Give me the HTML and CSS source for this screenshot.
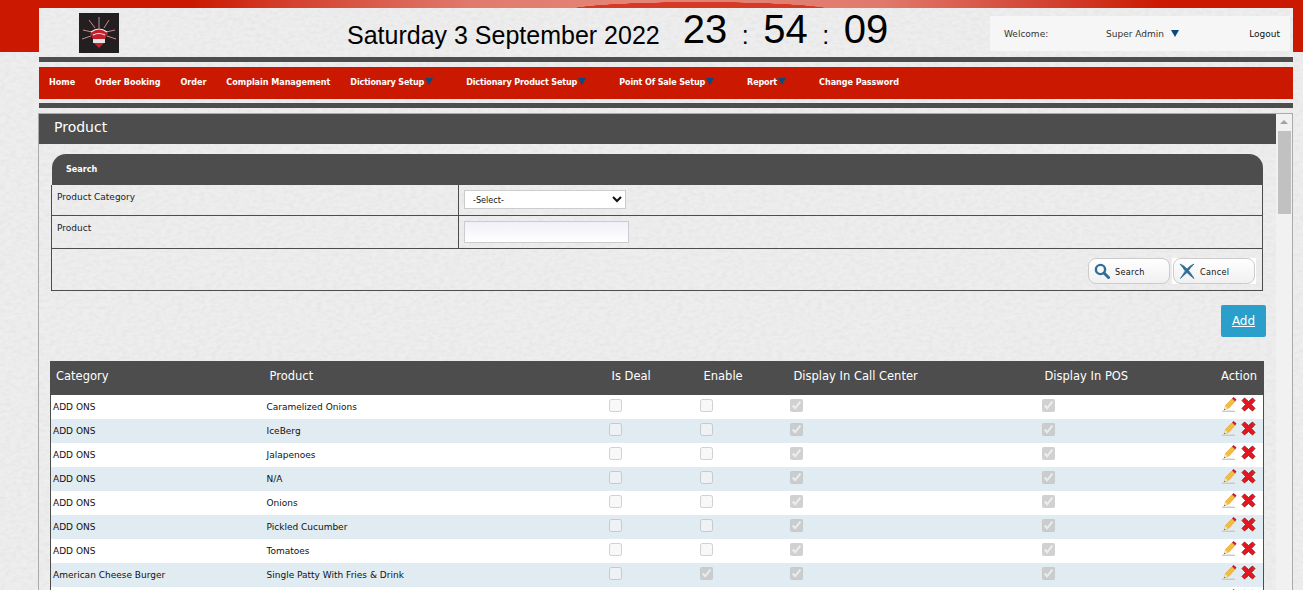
FILE: index.html
```html
<!DOCTYPE html>
<html lang="en">
<head>
    <meta charset="UTF-8">
    <title>Product</title>
    <link rel="stylesheet" href="styles.css">
</head>
<body>
    <svg class="defs" width="0" height="0">
        <symbol id="pencil" viewBox="0 0 15 15">
            <path d="M0 14.300h13" stroke="#c9c9c9" stroke-width="1.400"/>
            <path d="M3.500 8.500 10 1.800l3 2.600-6.500 6.900-3.800 1.500z" fill="#f4bd3a" stroke="#dc9a20" stroke-width=".6"/>
            <path d="M10 1.500 11.500 0l3 2.600L13.200 4.600z" fill="#b8232f"/>
            <path d="M3.400 9 1.800 13l4-1.500z" fill="#f8e3b4"/>
            <path d="M2.300 11.800 1.800 13l1.300-.5z" fill="#222"/>
        </symbol>
        <symbol id="cross" viewBox="0 0 15 15">
            <path d="M3.500 1 7.500 4.600 11.500 1 14 3.600 10.400 7.500 14 11.400 11.500 14 7.500 10.400 3.500 14 1 11.400 4.600 7.500 1 3.600z" fill="#e2171f" stroke="#a8141b" stroke-width=".9"/>
        </symbol>
    </svg>

    <div class="topband"></div>
    <div class="page">
        <header class="head">
            <svg class="logo" viewBox="0 0 40 40">
                <rect width="40" height="40" fill="#231f20"/>
                <path d="M20 4v11M10 7l6 8M30 7l-5 8M4 17l9 2M36 17l-9 2M3 26l9-3M37 26l-9-3" stroke="#c98a8f" stroke-width="1"/>
                <path d="M11 20q9-8 18 0l-3 6H14z" fill="#c4202c"/>
                <path d="M12 19q8-6 16 0M14 22q6-3 12 0" stroke="#efefef" stroke-width="1.200" fill="none"/>
                <path d="M14 26h12v4H14z" fill="#e4e4e4"/>
                <path d="M15 30h10l-5 5z" fill="#c4202c"/>
            </svg>
            <div class="date">Saturday 3 September 2022</div>
            <div class="clock"><span>23</span><i>:</i><span>54</span><i>:</i><span>09</span></div>
            <div class="welcome">
                <span class="welcome-label">Welcome:</span>
                <span class="welcome-name">Super Admin</span>
                <span class="caret caret-big"></span>
                <a class="logout">Logout</a>
            </div>
        </header>
        <div class="rule"></div>
        <nav class="nav">
            <a>Home</a>
            <a>Order Booking</a>
            <a>Order</a>
            <a>Complain Management</a>
            <a class="has-caret">Dictionary Setup<span class="caret"></span></a>
            <a class="has-caret">Dictionary Product Setup<span class="caret"></span></a>
            <a class="has-caret">Point Of Sale Setup<span class="caret"></span></a>
            <a class="has-caret">Report<span class="caret"></span></a>
            <a>Change Password</a>
        </nav>
        <div class="rule rule-low"></div>

        <section class="panel">
            <div class="panel-body">
                <h2 class="panel-title">Product</h2>

                <div class="search-head">Search</div>
                <form class="search">
                    <div class="search-row row-one">
                        <label class="search-label">Product Category</label>
                        <div class="search-field">
                            <select class="select"><option>-Select-</option></select>
                        </div>
                    </div>
                    <div class="search-row row-two">
                        <label class="search-label">Product</label>
                        <div class="search-field">
                            <input class="text" type="text">
                        </div>
                    </div>
                    <div class="search-actions">
                        <button type="button" class="btn">
                            <svg viewBox="0 0 16 16"><circle cx="6.500" cy="6.500" r="4.600" fill="none" stroke="#2f6f96" stroke-width="2.400"/><path d="M10 10l4.500 4.500" stroke="#2f6f96" stroke-width="3" stroke-linecap="round"/></svg>
                            Search
                        </button>
                        <div class="btn-wrap">
                            <button type="button" class="btn">
                                <svg viewBox="0 0 16 16"><path d="M1 1q5 2 7 5 3-3.500 7-5-4 4-5.500 6.500Q12.500 11 15 15.500 11 12.500 8 9.500 5 12 1.500 15.500 4 11.500 6.300 8 3.500 4 1 1z" fill="#2f6f96" stroke="#2f6f96" stroke-width=".8"/></svg>
                                Cancel
                            </button>
                        </div>
                    </div>
                </form>

                <div class="add-row"><a class="add">Add</a></div>

                <table class="grid">
                    <colgroup>
                        <col class="c-cat"><col class="c-prod"><col class="c-deal"><col class="c-enable"><col class="c-call"><col class="c-pos"><col class="c-act">
                    </colgroup>
                    <thead>
                        <tr>
                            <th>Category</th><th>Product</th><th>Is Deal</th><th>Enable</th><th>Display In Call Center</th><th>Display In POS</th><th class="th-action">Action</th>
                        </tr>
                    </thead>
                    <tbody>
                        <tr><td>ADD ONS</td><td>Caramelized Onions</td><td><input type="checkbox" disabled></td><td><input type="checkbox" disabled></td><td><input type="checkbox" disabled checked></td><td><input type="checkbox" disabled checked></td><td class="actions"><svg><use href="#pencil"/></svg><svg><use href="#cross"/></svg></td></tr>
                        <tr><td>ADD ONS</td><td>IceBerg</td><td><input type="checkbox" disabled></td><td><input type="checkbox" disabled></td><td><input type="checkbox" disabled checked></td><td><input type="checkbox" disabled checked></td><td class="actions"><svg><use href="#pencil"/></svg><svg><use href="#cross"/></svg></td></tr>
                        <tr><td>ADD ONS</td><td>Jalapenoes</td><td><input type="checkbox" disabled></td><td><input type="checkbox" disabled></td><td><input type="checkbox" disabled checked></td><td><input type="checkbox" disabled checked></td><td class="actions"><svg><use href="#pencil"/></svg><svg><use href="#cross"/></svg></td></tr>
                        <tr><td>ADD ONS</td><td>N/A</td><td><input type="checkbox" disabled></td><td><input type="checkbox" disabled></td><td><input type="checkbox" disabled checked></td><td><input type="checkbox" disabled checked></td><td class="actions"><svg><use href="#pencil"/></svg><svg><use href="#cross"/></svg></td></tr>
                        <tr><td>ADD ONS</td><td>Onions</td><td><input type="checkbox" disabled></td><td><input type="checkbox" disabled></td><td><input type="checkbox" disabled checked></td><td><input type="checkbox" disabled checked></td><td class="actions"><svg><use href="#pencil"/></svg><svg><use href="#cross"/></svg></td></tr>
                        <tr><td>ADD ONS</td><td>Pickled Cucumber</td><td><input type="checkbox" disabled></td><td><input type="checkbox" disabled></td><td><input type="checkbox" disabled checked></td><td><input type="checkbox" disabled checked></td><td class="actions"><svg><use href="#pencil"/></svg><svg><use href="#cross"/></svg></td></tr>
                        <tr><td>ADD ONS</td><td>Tomatoes</td><td><input type="checkbox" disabled></td><td><input type="checkbox" disabled></td><td><input type="checkbox" disabled checked></td><td><input type="checkbox" disabled checked></td><td class="actions"><svg><use href="#pencil"/></svg><svg><use href="#cross"/></svg></td></tr>
                        <tr><td>American Cheese Burger</td><td>Single Patty With Fries &amp; Drink</td><td><input type="checkbox" disabled></td><td><input type="checkbox" disabled checked></td><td><input type="checkbox" disabled checked></td><td><input type="checkbox" disabled checked></td><td class="actions"><svg><use href="#pencil"/></svg><svg><use href="#cross"/></svg></td></tr>
                        <tr><td></td><td></td><td></td><td></td><td></td><td></td><td class="actions"><svg><use href="#pencil"/></svg><svg><use href="#cross"/></svg></td></tr>
                    </tbody>
                </table>
            </div>
            <div class="scrollbar">
                <div class="scroll-up"></div>
                <div class="scroll-thumb"></div>
            </div>
        </section>
    </div>
</body>
</html>
```

FILE: styles.css
```css
/* General page */
html, body {
    height: 590px;
    overflow: hidden;
}

body {
    margin: 0;
    font-family: "DejaVu Sans", sans-serif;
    font-size: 9px;
    color: #111;
    background-color: #eeeeee;
    background-image:
        linear-gradient(#cb1800, #cb1800),
        url("data:image/svg+xml,%3Csvg xmlns='http://www.w3.org/2000/svg' width='500' height='500'%3E%3Cfilter id='n'%3E%3CfeTurbulence type='fractalNoise' baseFrequency='.18 .3' numOctaves='4' stitchTiles='stitch'/%3E%3CfeColorMatrix values='0 0 0 0 .5 0 0 0 0 .5 0 0 0 0 .5 .3 0 0 0 -.1'/%3E%3C/filter%3E%3Crect width='500' height='500' filter='url(%23n)'/%3E%3C/svg%3E");
    background-size: 100% 52px, 500px 500px;
    background-repeat: no-repeat, repeat;
}

.defs {
    position: absolute;
}

.topband {
    height: 8px;
    background:
        radial-gradient(ellipse 135px 9px at 700px 11px, #d53a26 98%, transparent 100%),
        linear-gradient(90deg, #cb1800 0, #cb1800 190px, #d4402e 290px, #e07a6c 470px, #e58576 640px, #e07a6c 880px, #d24534 1040px, #cb1800 1165px);
}

.page {
    margin: 0 10px 0 39px;
}

/* Header */
.head {
    height: 49px;
    display: flex;
    align-items: flex-start;
    background-color: #eeeeee;
    background-image: url("data:image/svg+xml,%3Csvg xmlns='http://www.w3.org/2000/svg' width='500' height='500'%3E%3Cfilter id='n'%3E%3CfeTurbulence type='fractalNoise' baseFrequency='.18 .3' numOctaves='4' stitchTiles='stitch'/%3E%3CfeColorMatrix values='0 0 0 0 .5 0 0 0 0 .5 0 0 0 0 .5 .3 0 0 0 -.1'/%3E%3C/filter%3E%3Crect width='500' height='500' filter='url(%23n)'/%3E%3C/svg%3E");
}

.logo {
    width: 40px;
    height: 40px;
    margin: 5px 0 0 40px;
}

.date {
    margin: 11px 0 0 228px;
    font-family: "Liberation Sans", sans-serif;
    font-size: 25px;
    line-height: 32px;
    color: #000;
    white-space: nowrap;
}

.clock {
    margin: 0 0 0 23px;
    display: flex;
    font-family: "Liberation Sans", sans-serif;
    font-size: 40px;
    line-height: 42px;
    color: #000;
}

.clock i {
    font-style: normal;
    font-size: 25px;
    width: 36px;
    margin-top: 6px;
    text-align: center;
}

.welcome {
    margin: 8px 3px 0 auto;
    width: 300px;
    height: 35px;
    box-sizing: border-box;
    padding: 0 10px 0 14px;
    display: flex;
    align-items: center;
    background: #f6f6f6;
    color: #333;
}

.welcome-label {
    width: 102px;
}

.logout {
    margin-left: auto;
    color: #111;
}

.caret {
    display: inline-block;
    width: 0;
    height: 0;
    border-left: 4px solid transparent;
    border-right: 4px solid transparent;
    border-top: 7px solid #0b4a7d;
}

.caret-big {
    margin: -1px 0 0 7px;
}

.rule {
    height: 5px;
    background: #4d4d4d;
}

.rule-low {
    margin-top: 4px;
}

/* Main menu */
.nav {
    height: 32px;
    box-sizing: border-box;
    margin-top: 5px;
    padding: 0 0 2px 10px;
    display: flex;
    align-items: center;
    gap: 20px;
    background: #cb1800;
}

.nav a {
    font-family: "DejaVu Sans Condensed", "DejaVu Sans", sans-serif;
    letter-spacing: -.05px;
    color: #fff;
    font-weight: bold;
    white-space: nowrap;
}

.nav .has-caret {
    margin-right: 13px;
    letter-spacing: -.17px;
}

.nav .caret {
    margin-left: 1px;
}

/* Content panel */
.panel {
    height: 477px;
    margin: 5px 0 0 -1px;
    border: 1px solid #aaa;
    border-bottom: 0;
    box-sizing: border-box;
    display: flex;
    overflow: hidden;
}

.panel-body {
    flex: 1;
    min-width: 0;
}

.panel-title {
    margin: 0;
    height: 30px;
    padding-left: 15px;
    font-size: 14px;
    font-weight: normal;
    line-height: 27px;
    color: #fff;
    background: #4d4d4d;
}

.scrollbar {
    width: 16px;
    background: #f1f1f1;
}

.scroll-up {
    width: 0;
    height: 0;
    margin: 6px auto 0;
    border-left: 4px solid transparent;
    border-right: 4px solid transparent;
    border-bottom: 4px solid #a3a3a3;
}

.scroll-thumb {
    height: 83px;
    margin: 7px 1px 0 2px;
    background: #c1c1c1;
}

/* Search box */
.search-head {
    height: 31px;
    margin: 10px 13px 0 13px;
    padding-left: 14px;
    font-family: "DejaVu Sans Condensed", "DejaVu Sans", sans-serif;
    line-height: 30px;
    font-weight: bold;
    color: #fff;
    background: #4d4d4d;
    border-radius: 14px 14px 0 0;
}

.search {
    margin: 0 13px 0 12px;
    border: 1px solid #4d4d4d;
    border-top: 0;
}

.search-row {
    display: flex;
    border-bottom: 1px solid #4d4d4d;
}

.row-one {
    height: 30px;
}

.row-two {
    height: 32px;
}

.search-label {
    width: 401px;
    padding: 7px 0 0 5px;
    color: #222;
}

.search-field {
    flex: 1;
    padding-left: 5px;
    border-left: 1px solid #4d4d4d;
}

.select {
    width: 162px;
    height: 19px;
    margin-top: 5px;
    padding-left: 4px;
    font: 9px "DejaVu Sans Condensed", "DejaVu Sans", sans-serif;
    color: #111;
    background: #fff;
    border: 1px solid #ccc;
}

.text {
    width: 165px;
    height: 22px;
    margin-top: 5px;
    padding: 0;
    box-sizing: border-box;
    border: 1px solid #ccc;
    background: linear-gradient(#f0f0f8, #fff);
}

.search-actions {
    height: 41px;
    padding: 9px 6px 0 0;
    box-sizing: border-box;
    display: flex;
    justify-content: flex-end;
    align-items: flex-start;
}

.btn {
    width: 82px;
    height: 26px;
    padding: 1px 0 0 5px;
    display: flex;
    align-items: center;
    gap: 5px;
    font: 9px "DejaVu Sans Condensed", "DejaVu Sans", sans-serif;
    letter-spacing: .3px;
    color: #111;
    border: 1px solid #ccc;
    border-radius: 8px;
    background: linear-gradient(#fff, #f0f0f0);
}

.btn svg {
    width: 16px;
    height: 16px;
    margin-top: -1px;
}

.btn-wrap {
    margin-left: 2px;
    padding: 0 1px;
    background: #fff;
}

/* Add button */
.add-row {
    margin: 14px 10px 24px 0;
    display: flex;
    justify-content: flex-end;
}

.add {
    width: 45px;
    height: 32px;
    line-height: 32px;
    text-align: center;
    font-size: 12px;
    color: #fff;
    text-decoration: underline;
    background: #2a9fcc;
    border-radius: 2px;
}

/* Product grid */
.grid {
    width: 1214px;
    margin-left: 11px;
    table-layout: fixed;
    border-collapse: collapse;
    border-left: 1px solid #4d4d4d;
    border-right: 1px solid #4d4d4d;
}

.c-cat { width: 214px; }
.c-prod { width: 341px; }
.c-deal { width: 91px; }
.c-enable { width: 90px; }
.c-call { width: 252px; }
.c-pos { width: 167px; }

.grid th {
    height: 34px;
    box-sizing: border-box;
    padding: 0 0 4px 5px;
    text-align: left;
    font-size: 11.5px;
    font-weight: normal;
    color: #fff;
    background: #4d4d4d;
}

.grid th:nth-child(n+3) {
    padding-left: 7px;
}

.grid th:nth-child(3), .grid th:nth-child(6) {
    padding-left: 6px;
}

.grid .th-action {
    padding: 0 6px 4px 0;
    text-align: right;
}

.grid td {
    height: 24px;
    box-sizing: border-box;
    padding: 0 0 0 2px;
    color: #111;
    background: #fff;
    white-space: nowrap;
}

.grid td:nth-child(n+3) {
    padding-left: 3px;
}

.grid tbody tr:nth-child(even) td {
    background: #e0ecf2;
}

.grid input {
    display: block;
    margin: 0 0 3px;
}

.grid td.actions {
    padding: 2px 0 0 16px;
    vertical-align: top;
    font-size: 0;
}

.actions svg {
    width: 15px;
    height: 15px;
    display: inline-block;
    vertical-align: top;
}

.actions svg + svg {
    margin-left: 4px;
}
```
